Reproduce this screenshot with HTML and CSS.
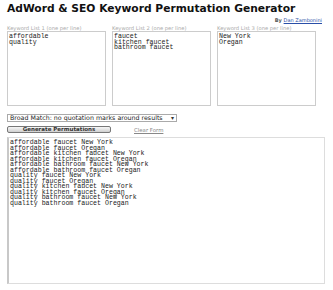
FILE: index.html
```html
<!DOCTYPE html>
<html lang="en">
<head>
    <meta charset="UTF-8">
    <title>AdWord &amp; SEO Keyword Permutation Generator</title>
    <link rel="stylesheet" href="styles.css">
</head>
<body>
    <div class="page">
        <h1 class="title">AdWord &amp; SEO Keyword Permutation Generator</h1>
        <p class="byline">By <a href="#">Dan Zambonini</a></p>

        <div class="lists">
            <label class="list">
                <span class="list-label">Keyword List 1 (one per line)</span>
                <textarea spellcheck="false">affordable
quality</textarea>
            </label>
            <label class="list">
                <span class="list-label">Keyword List 2 (one per line)</span>
                <textarea spellcheck="false">faucet
kitchen faucet
bathroom faucet</textarea>
            </label>
            <label class="list">
                <span class="list-label">Keyword List 3 (one per line)</span>
                <textarea spellcheck="false">New York
Oregan</textarea>
            </label>
        </div>

        <div class="match-wrap">
            <select class="match">
                <option>Broad Match: no quotation marks around results</option>
                <option>Phrase Match: "quotation marks" around results</option>
                <option>Exact Match: [square brackets] around results</option>
            </select>
            <span class="match-arrow">&#9662;</span>
        </div>

        <div class="actions">
            <button class="btn" type="button">Generate Permutations</button>
            <a class="clear" href="#">Clear Form</a>
        </div>

        <textarea class="output" spellcheck="false">affordable faucet New York
affordable faucet Oregan
affordable kitchen faucet New York
affordable kitchen faucet Oregan
affordable bathroom faucet New York
affordable bathroom faucet Oregan
quality faucet New York
quality faucet Oregan
quality kitchen faucet New York
quality kitchen faucet Oregan
quality bathroom faucet New York
quality bathroom faucet Oregan</textarea>
    </div>
</body>
</html>
```

FILE: styles.css
```css
* {
    box-sizing: border-box;
}

body {
    margin: 0;
    background: #fff;
    font-family: 'DejaVu Sans', Verdana, sans-serif;
    color: #222;
}

.page {
    padding: 3px 8px 0 7px;
}

.title {
    margin: 0;
    font-size: 10.7px;
    line-height: 12px;
    font-weight: bold;
    color: #111;
}

.byline {
    margin: 2px 3px 0 0;
    text-align: right;
    font-size: 5px;
    line-height: 6px;
    font-weight: bold;
    color: #555;
}

.byline a {
    color: #2a4fa8;
    font-weight: normal;
}

.lists {
    display: flex;
    gap: 6px;
    margin-top: 2px;
}

.list {
    display: flex;
    flex-direction: column;
    width: 99px;
}

.list-label {
    font-size: 5.2px;
    line-height: 6px;
    color: #aaa;
}

textarea {
    font-family: 'Liberation Mono', 'Courier New', monospace;
    font-size: 6.6px;
    line-height: 5.5px;
    color: #1a1a1a;
    border: 1px solid #ccc;
    padding: 2px 1px;
    margin: 0;
    outline: none;
    resize: none;
}

.list textarea {
    height: 75px;
}

.match-wrap {
    position: relative;
    width: 170px;
    height: 8px;
    margin-top: 8px;
}

.match {
    display: block;
    appearance: none;
    -webkit-appearance: none;
    width: 100%;
    height: 8px;
    margin: 0;
    padding: 0 0 0 2px;
    border: 1px solid #aaa;
    border-radius: 0;
    background: #fff;
    font-family: 'DejaVu Sans', Verdana, sans-serif;
    font-size: 6.3px;
    line-height: 6px;
    color: #222;
}

.match-arrow {
    position: absolute;
    right: 3px;
    top: 0;
    font-size: 6px;
    line-height: 8px;
    color: #333;
}

.actions {
    display: flex;
    align-items: center;
    gap: 23px;
    margin-top: 4px;
}

.btn {
    width: 104px;
    height: 7px;
    padding: 0;
    border: 1px solid #777;
    border-radius: 2px;
    background: linear-gradient(#f7f7f7, #cfcfcf);
    font-family: 'DejaVu Sans', Verdana, sans-serif;
    font-size: 5.5px;
    line-height: 5px;
    font-weight: bold;
    color: #333;
}

.clear {
    font-size: 5.4px;
    color: #888;
}

.output {
    display: block;
    width: 318px;
    height: 147px;
    margin-top: 4px;
    border: 1px solid #ddd;
    border-left: 2px solid #c8c8c8;
}
```
